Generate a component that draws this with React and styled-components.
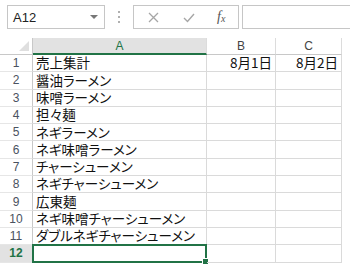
import React from "react";
import styled, { createGlobalStyle } from "styled-components";

const GREEN = "#217346";
const GRID = "#dadada";

const items = [
  "売上集計",
  "醤油ラーメン",
  "味噌ラーメン",
  "担々麺",
  "ネギラーメン",
  "ネギ味噌ラーメン",
  "チャーシューメン",
  "ネギチャーシューメン",
  "広東麺",
  "ネギ味噌チャーシューメン",
  "ダブルネギチャーシューメン",
  "",
];

export default function App() {
  return (
    <Page>
      <Global />
      <FormulaBar>
        <NameBox>
          <span>A12</span>
          <Caret />
        </NameBox>
        <Separator>
          <i />
          <i />
          <i />
        </Separator>
        <Buttons>
          <Btn>
            <svg width="11" height="11" viewBox="0 0 11 11">
              <path d="M1 1L10 10M10 1L1 10" stroke="#a6a6a6" strokeWidth="1.3" />
            </svg>
          </Btn>
          <Btn>
            <svg width="12" height="11" viewBox="0 0 12 11">
              <path d="M1 6L4.5 9.5L11 2" stroke="#a6a6a6" strokeWidth="1.4" fill="none" />
            </svg>
          </Btn>
          <Fx>
            f<sub>x</sub>
          </Fx>
        </Buttons>
        <FormulaInput />
      </FormulaBar>
      <Sheet>
        <Corner>
          <Triangle />
        </Corner>
        <ColHead $active>A</ColHead>
        <ColHead>B</ColHead>
        <ColHead>C</ColHead>
        {items.map((name, i) => {
          const sel = i === 11;
          return (
            <React.Fragment key={i}>
              <RowHead $active={sel}>{i + 1}</RowHead>
              <Cell>
                {name}
                {sel && (
                  <Selection>
                    <Handle />
                  </Selection>
                )}
              </Cell>
              <Cell $right>{i === 0 ? "8月1日" : ""}</Cell>
              <Cell $right>{i === 0 ? "8月2日" : ""}</Cell>
            </React.Fragment>
          );
        })}
      </Sheet>
    </Page>
  );
}

const Global = createGlobalStyle`
  body {
    margin: 0;
    background: #fff;
    font-family: "Noto Sans CJK JP", sans-serif;
  }
`;

const Page = styled.div`
  width: 350px;
  height: 267px;
  overflow: hidden;
  background: #fff;
`;

const FormulaBar = styled.div`
  display: flex;
  align-items: flex-start;
  height: 38px;
  padding: 5px 0 0 7px;
  box-sizing: border-box;
`;

const NameBox = styled.div`
  width: 98px;
  height: 24px;
  box-sizing: border-box;
  border: 1px solid #c6c6c6;
  display: flex;
  align-items: center;
  justify-content: space-between;
  padding: 0 6px 0 5px;
  font: 13px/1 "Liberation Sans", sans-serif;
  color: #222;
`;

const Caret = styled.span`
  width: 0;
  height: 0;
  border-left: 4px solid transparent;
  border-right: 4px solid transparent;
  border-top: 4px solid #777;
`;

const Separator = styled.div`
  width: 28px;
  height: 24px;
  display: flex;
  flex-direction: column;
  align-items: center;
  justify-content: center;
  gap: 3px;
  & i {
    width: 2px;
    height: 2px;
    background: #b0b0b0;
  }
`;

const Buttons = styled.div`
  width: 106px;
  height: 24px;
  box-sizing: border-box;
  border: 1px solid #c6c6c6;
  display: flex;
  align-items: center;
  padding-left: 13px;
  gap: 22px;
`;

const Btn = styled.span`
  display: flex;
  width: 13px;
  justify-content: center;
`;

const Fx = styled.span`
  font: italic 14px/1 "Liberation Serif", serif;
  color: #555;
  & sub {
    font-size: 10px;
    vertical-align: -1px;
  }
`;

const FormulaInput = styled.div`
  flex: 1;
  margin-left: 3px;
  height: 24px;
  box-sizing: border-box;
  border: 1px solid #c6c6c6;
  border-right: none;
`;

const Sheet = styled.div`
  display: grid;
  grid-template-columns: 33px 174px 69px 66px;
  grid-template-rows: 17px repeat(12, 17.3px);
`;

const Corner = styled.div`
  position: relative;
  border-right: 1px solid #c8c8c8;
  border-bottom: 1px solid #c8c8c8;
`;

const Triangle = styled.span`
  position: absolute;
  right: 3px;
  bottom: 3px;
  width: 0;
  height: 0;
  border-left: 10px solid transparent;
  border-bottom: 10px solid #dfdfdf;
`;

const ColHead = styled.div`
  display: flex;
  align-items: center;
  justify-content: center;
  font: 12px/1 "Liberation Sans", sans-serif;
  color: ${(p) => (p.$active ? GREEN : "#444")};
  background: ${(p) => (p.$active ? "#e2e2e2" : "#fff")};
  border-right: 1px solid #dcdcdc;
  border-bottom: ${(p) => (p.$active ? `2px solid ${GREEN}` : "1px solid #c8c8c8")};
`;

const RowHead = styled.div`
  display: flex;
  align-items: center;
  justify-content: center;
  font: ${(p) => (p.$active ? "bold " : "")}12px/1 "Liberation Sans", sans-serif;
  color: ${(p) => (p.$active ? GREEN : "#4a5260")};
  background: ${(p) => (p.$active ? "#e2e2e2" : "#fff")};
  border-right: 1px solid #c8c8c8;
  border-bottom: 1px solid #e6e6e6;
`;

const Cell = styled.div`
  position: relative;
  display: flex;
  align-items: center;
  justify-content: ${(p) => (p.$right ? "flex-end" : "flex-start")};
  padding: 0 3px;
  font-size: 13.5px;
  line-height: 1;
  font-feature-settings: "palt";
  color: #111;
  white-space: nowrap;
  border-right: 1px solid ${GRID};
  border-bottom: 1px solid ${GRID};
`;

const Selection = styled.span`
  position: absolute;
  inset: -1px;
  border: 2px solid ${GREEN};
`;

const Handle = styled.span`
  position: absolute;
  right: -4px;
  bottom: -4px;
  width: 5px;
  height: 5px;
  background: ${GREEN};
  border: 1px solid #fff;
`;
